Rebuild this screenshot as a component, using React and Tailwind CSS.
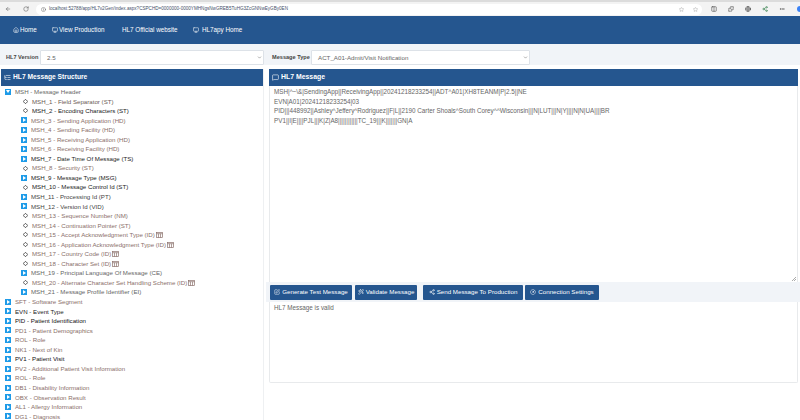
import { Home, Monitor, RotateCw, ArrowLeft, Info, Star, MoreHorizontal, ChevronDown, Diamond, SquarePen, Wand2, Share2, CircleGauge, MessageSquare, ListTree, Columns2, Puzzle, Globe } from 'lucide-react'

const mshFields = [
  ['MSH_1 - Field Separator (ST)', 'leaf', 'text-[#6b5a55]'],
  ['MSH_2 - Encoding Characters (ST)', 'leaf', 'text-[#222]'],
  ['MSH_3 - Sending Application (HD)', 'node', 'text-[#8a6f6a]'],
  ['MSH_4 - Sending Facility (HD)', 'node', 'text-[#8a6f6a]'],
  ['MSH_5 - Receiving Application (HD)', 'node', 'text-[#8a6f6a]'],
  ['MSH_6 - Receiving Facility (HD)', 'node', 'text-[#8a6f6a]'],
  ['MSH_7 - Date Time Of Message (TS)', 'node', 'text-[#222]'],
  ['MSH_8 - Security (ST)', 'leaf', 'text-[#8a6f6a]'],
  ['MSH_9 - Message Type (MSG)', 'node', 'text-[#222]'],
  ['MSH_10 - Message Control Id (ST)', 'leaf', 'text-[#222]'],
  ['MSH_11 - Processing Id (PT)', 'node', 'text-[#444]'],
  ['MSH_12 - Version Id (VID)', 'node', 'text-[#444]'],
  ['MSH_13 - Sequence Number (NM)', 'leaf', 'text-[#8a6f6a]'],
  ['MSH_14 - Continuation Pointer (ST)', 'leaf', 'text-[#8a6f6a]'],
  ['MSH_15 - Accept Acknowledgment Type (ID)', 'leaf', 'text-[#8a6f6a]', true],
  ['MSH_16 - Application Acknowledgment Type (ID)', 'leaf', 'text-[#8a6f6a]', true],
  ['MSH_17 - Country Code (ID)', 'leaf', 'text-[#8a6f6a]', true],
  ['MSH_18 - Character Set (ID)', 'leaf', 'text-[#8a6f6a]', true],
  ['MSH_19 - Principal Language Of Message (CE)', 'node', 'text-[#666]'],
  ['MSH_20 - Alternate Character Set Handling Scheme (ID)', 'leaf', 'text-[#8a6f6a]', true],
  ['MSH_21 - Message Profile Identifier (EI)', 'node', 'text-[#666]'],
]

const segments = [
  ['SFT - Software Segment', 'text-[#8a6f6a]'],
  ['EVN - Event Type', 'text-[#222]'],
  ['PID - Patient Identification', 'text-[#111]'],
  ['PD1 - Patient Demographics', 'text-[#8a6f6a]'],
  ['ROL - Role', 'text-[#8a6f6a]'],
  ['NK1 - Next of Kin', 'text-[#8a6f6a]'],
  ['PV1 - Patient Visit', 'text-[#111]'],
  ['PV2 - Additional Patient Visit Information', 'text-[#8a6f6a]'],
  ['ROL - Role', 'text-[#8a6f6a]'],
  ['DB1 - Disability Information', 'text-[#8a6f6a]'],
  ['OBX - Observation Result', 'text-[#8a6f6a]'],
  ['AL1 - Allergy Information', 'text-[#8a6f6a]'],
  ['DG1 - Diagnosis', 'text-[#8a6f6a]'],
]

const messageLines = [
  'MSH|^~\\&|SendingApp||ReceivingApp||20241218233254||ADT^A01|XH8TEANM|P|2.5||NE',
  'EVN|A01|20241218233254|03',
  'PID|||448992||Ashley^Jeffery^Rodriguez||F|L||2190 Carter Shoals^South Corey^^Wisconsin|||N|LUT|||N|Y||||N|N|UA||||BR',
  'PV1||I|E||||PJL|||K|Z|A8||||||||||||TC_19|||K|||||||GN|A',
]

const TableIcon = () => (
  <svg viewBox="0 0 8 7" className="ml-[1px] w-[7px] h-[6px] text-[#8a6f6a]" fill="none" stroke="currentColor" strokeWidth="0.8">
    <rect x="0.5" y="0.5" width="7" height="6" />
    <path d="M0.5 2H7.5M2.8 2V6.5M5.2 2V6.5" />
  </svg>
)

const TreeToggle = ({ open }) => (
  <span className="w-[6px] h-[6px] bg-[#1e9be8] flex items-center justify-center shrink-0">
    {open ? (
      <span className="w-0 h-0 border-x-[2px] border-x-transparent border-t-[3px] border-t-white" />
    ) : (
      <span className="w-0 h-0 border-y-[2px] border-y-transparent border-l-[3px] border-l-white" />
    )}
  </span>
)

const FieldRow = ({ label, kind, color, table }) => (
  <div className="h-[9.55px] flex items-center pl-[20px]">
    {kind === 'node' ? (
      <>
        <TreeToggle />
        <span className={`ml-[4px] whitespace-nowrap ${color}`}>{label}</span>
      </>
    ) : (
      <>
        <span className="w-[7px] ml-[1px] flex justify-center shrink-0">
          <Diamond className="w-[5px] h-[5px] text-[#333]" strokeWidth={4} />
        </span>
        <span className={`ml-[3px] whitespace-nowrap ${color}`}>{label}</span>
      </>
    )}
    {table && <TableIcon />}
  </div>
)

const Button = ({ icon: Icon, width, children }) => (
  <button className={`h-[15px] ${width} flex items-center justify-center gap-[2px] rounded-[1px] bg-[#25568f] text-white text-[6.2px] whitespace-nowrap`}>
    <Icon className="w-[6px] h-[6px]" />
    {children}
  </button>
)

const NavLink = ({ icon: Icon, width, children }) => (
  <span className={`flex items-center gap-[1px] text-white text-[6.3px] whitespace-nowrap ${width}`}>
    {Icon && <Icon className="w-[6px] h-[6px]" />}
    {children}
  </span>
)

export default function App() {
  return (
    <div className="w-[800px] h-[420px] overflow-hidden bg-white flex flex-col font-['Liberation_Sans',Arial,sans-serif]">
      {/* browser chrome */}
      <div className="h-[16px] shrink-0 bg-[#f3f3f3] border-t-[2px] border-[#dcdcdc] flex items-center pl-[5px] text-[#555]">
        <ArrowLeft className="w-[6px] h-[6px]" />
        <RotateCw className="ml-[12px] w-[6px] h-[6px]" />
        <div className="ml-[7px] w-[666px] h-[11px] shrink-0 rounded-full bg-white flex items-center pl-[5px] pr-[4px] min-w-0">
          <Info className="w-[5px] h-[5px]" />
          <span className="ml-[3px] text-[4.6px] text-[#44506a] whitespace-nowrap">localhost:52788/app/HL7v2Gen/index.aspx?CSPCHD=0000000-0000YMHNgsNwGREB5TuHG3ZcGNNwEyGBy0EN</span>
          <Star className="ml-auto w-[5px] h-[5px] text-[#999]" />
          <Star className="ml-[9px] w-[5px] h-[5px] text-[#999]" />
        </div>
        <div className="ml-[9px] flex items-center gap-[11px]">
          <Columns2 className="w-[6px] h-[6px] text-[#333]" />
          <Puzzle className="w-[6px] h-[6px] text-[#333]" />
          <Globe className="w-[6px] h-[6px] text-[#333]" />
          <Share2 className="w-[6px] h-[6px] text-[#2d7a44]" />
          <MoreHorizontal className="w-[6px] h-[6px] text-[#333]" />
        </div>
        <span className="ml-auto w-[3px] h-[6px] rounded-l-full bg-[#3b82f6]" />
      </div>

      {/* nav */}
      <nav className="h-[28px] shrink-0 bg-[#25568f] flex items-center pl-[13px]">
        <NavLink icon={Home} width="w-[39px]">Home</NavLink>
        <NavLink icon={Monitor} width="w-[70px]">View Production</NavLink>
        <NavLink width="w-[71px]">HL7 Official website</NavLink>
        <NavLink icon={Monitor}><span className="ml-[2px]">HL7apy Home</span></NavLink>
      </nav>

      {/* selects */}
      <div className="h-[21px] shrink-0 bg-[#f1f4f8] flex items-end text-[6.2px] text-[#333]">
        <span className="ml-[6px] h-[15px] flex items-center font-bold text-[5.6px] w-[34px] whitespace-nowrap text-[#444]">HL7 Version</span>
        <div className="w-[224px] h-[15px] bg-white border border-[#dde2e8] rounded-[1px] flex items-center justify-between pl-[6px] pr-[1px]">
          <span className="text-[#666]">2.5</span>
          <ChevronDown className="w-[5px] h-[5px] text-[#444]" />
        </div>
        <span className="ml-[8px] h-[15px] flex items-center font-bold text-[5.6px] w-[39px] whitespace-nowrap text-[#444]">Message Type</span>
        <div className="w-[219px] h-[15px] bg-white border border-[#dde2e8] rounded-[1px] flex items-center justify-between pl-[6px] pr-[1px]">
          <span className="text-[#666]">ACT_A01-Admit/Visit Notification</span>
          <ChevronDown className="w-[5px] h-[5px] text-[#444]" />
        </div>
      </div>

      {/* panels */}
      <div className="flex-1 min-h-0 flex pt-[4px] bg-white">
        <section className="w-[263px] ml-[1px] shrink-0 flex flex-col border-r border-[#eef0f2]">
          <h2 className="h-[17px] shrink-0 bg-[#25568f] text-white text-[6.7px] font-bold flex items-center gap-[2px] pl-[3px] whitespace-nowrap">
            <ListTree className="w-[7px] h-[7px]" />
            HL7 Message Structure
          </h2>
          <div className="pt-[1px] text-[6.15px] leading-[9.55px] overflow-hidden">
            <div className="h-[9.55px] flex items-center pl-[4px]">
              <TreeToggle open />
              <span className="ml-[4px] text-[#666] whitespace-nowrap">MSH - Message Header</span>
            </div>
            {mshFields.map(([label, kind, color, table], i) => (
              <FieldRow key={i} label={label} kind={kind} color={color} table={table} />
            ))}
            {segments.map(([label, color], i) => (
              <div key={i} className="h-[9.55px] flex items-center pl-[4px]">
                <TreeToggle />
                <span className={`ml-[4px] whitespace-nowrap ${color}`}>{label}</span>
              </div>
            ))}
          </div>
        </section>

        <section className="ml-[2px] w-[534px] shrink-0 flex flex-col">
          <h2 className="ml-[3px] w-[529px] h-[17px] shrink-0 bg-[#25568f] text-white text-[6.9px] font-bold flex items-center gap-[2px] pl-[3px] whitespace-nowrap">
            <MessageSquare className="w-[7px] h-[7px]" />
            HL7 Message
          </h2>
          <div className="relative ml-[3px] w-[529px] h-[196px] shrink-0 pt-[1px] pl-[4px] text-[6.3px] leading-[9.55px] text-[#666] border-x border-[#e8eaec]">
            {messageLines.map((line, i) => (
              <div key={i} className="whitespace-nowrap">{line}</div>
            ))}
            <svg viewBox="0 0 4 4" className="absolute right-[1px] bottom-[1px] w-[4px] h-[4px] text-[#888]" stroke="currentColor" strokeWidth="0.7">
              <path d="M4 0L0 4M4 2L2 4" />
            </svg>
          </div>
          <div className="h-[20px] shrink-0 bg-[#f1f4f8] flex items-center pl-[4px]">
            <Button icon={SquarePen} width="w-[82px]">Generate Test Message</Button>
            <span className="ml-[3px]" />
            <Button icon={Wand2} width="w-[62px]">Validate Message</Button>
            <span className="ml-[6px]" />
            <Button icon={Share2} width="w-[100px]">Send Message To Production</Button>
            <span className="ml-[2px]" />
            <Button icon={CircleGauge} width="w-[74px]">Connection Settings</Button>
          </div>
          <div className="ml-[3px] w-[529px] h-[81px] shrink-0 pt-[1px] pl-[4px] text-[6.3px] leading-[9.55px] text-[#666] border-x border-b border-[#e8eaec] rounded-b-[2px]">HL7 Message is valid</div>
        </section>
      </div>
    </div>
  )
}
